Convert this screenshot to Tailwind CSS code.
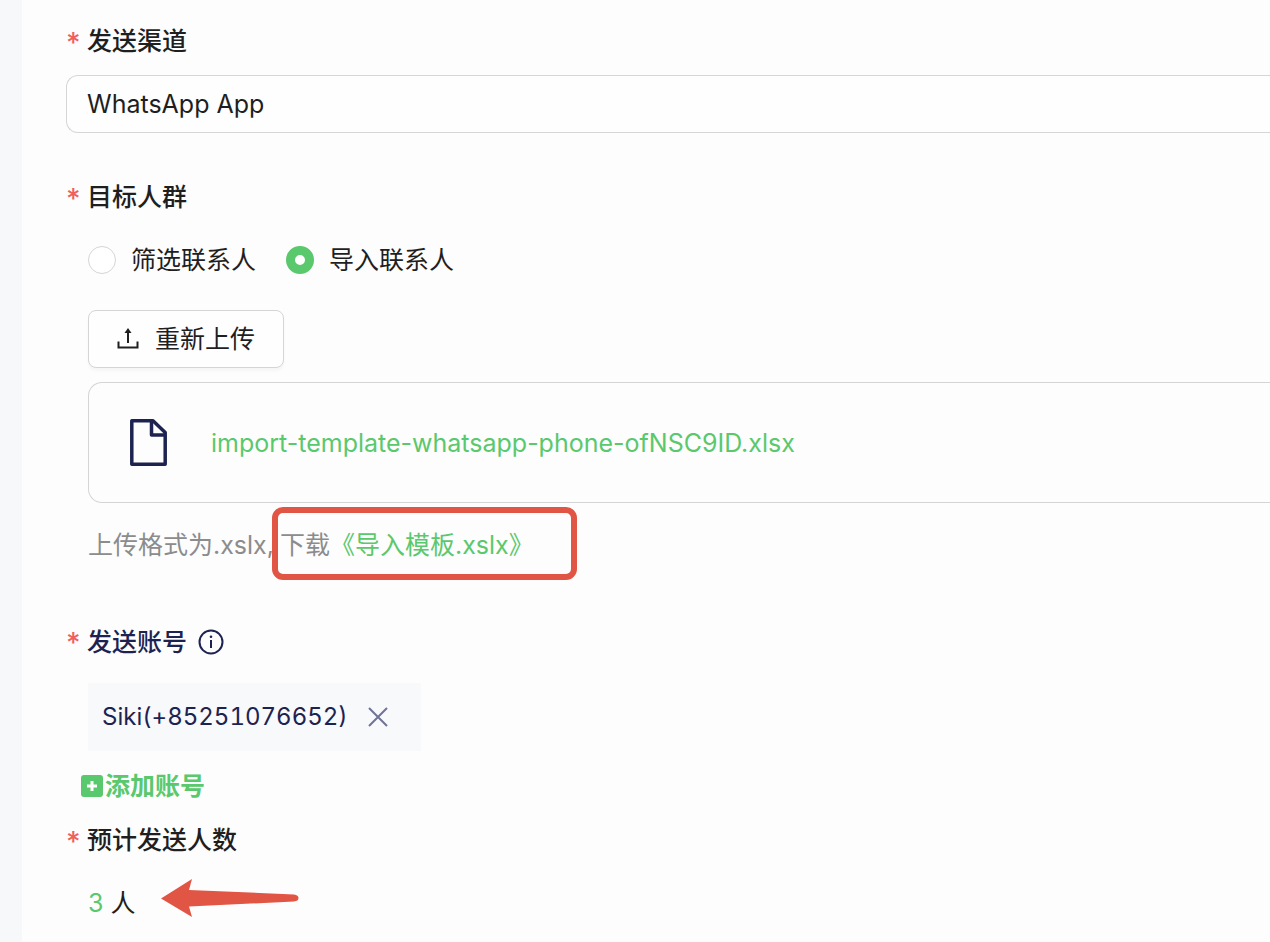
<!DOCTYPE html>
<html lang="zh-CN">
<head>
    <meta charset="UTF-8">
    <meta name="viewport" content="width=device-width, initial-scale=1.0">
    <title>发送设置</title>
    <script src="https://cdn.jsdelivr.net/npm/@tailwindcss/browser@4"></script>
</head>
<body class="flex min-h-screen overflow-x-hidden bg-[#f6f8fa] pl-[22px] font-['Inter','Noto_Sans_CJK_SC',sans-serif] text-[25px] leading-10 text-[#1f1f1f] antialiased">
    <form class="min-w-0 flex-1 bg-[#fdfdfd] pt-[21px] pl-11">

        <!-- Channel -->
        <label for="channel" class="flex font-medium"><span class="w-[21px] pt-[2px] text-[28px] text-[#f0605a]">*</span>发送渠道</label>
        <select id="channel" class="mt-3 block h-[58px] w-full appearance-none rounded-l-[12px] border border-r-0 border-[#d5d5d5] bg-[#fefefe] px-5">
            <option>WhatsApp App</option>
        </select>

        <!-- Audience -->
        <fieldset class="mt-11">
            <legend class="flex font-medium"><span class="w-[21px] pt-[2px] text-[28px] text-[#f0605a]">*</span>目标人群</legend>
            <div class="mt-[21px] flex gap-[30px] pl-[22px]">
                <label class="flex items-center gap-[15px]">
                    <input type="radio" name="audience" class="size-7 appearance-none rounded-full border border-[#d5d5d5] bg-white checked:border-[9px] checked:border-[#5ac86c]">
                    筛选联系人
                </label>
                <label class="flex items-center gap-[15px]">
                    <input type="radio" name="audience" checked class="size-7 appearance-none rounded-full border border-[#d5d5d5] bg-white checked:border-[9px] checked:border-[#5ac86c]">
                    导入联系人
                </label>
            </div>
        </fieldset>

        <div class="mt-[30px] pl-[22px]">
            <button type="button" class="flex h-[58px] items-center gap-4 rounded-lg border border-[#d5d5d5] bg-[#fefefe] px-7 shadow-[0_3px_3px_rgba(0,0,0,0.03)]">
                <svg class="h-[22px] w-[22px]" viewBox="0 0 22 22" fill="none" stroke="currentColor" stroke-width="2">
                    <path d="M1.500 13.500v6h19v-6M11 15V4" />
                    <path d="M11 0l3.500 5h-7z" fill="currentColor" stroke="none" />
                </svg>
                重新上传
            </button>

            <div class="mt-[14px] flex h-[121px] items-center gap-11 rounded-l-[14px] border border-r-0 border-[#d5d5d5] pl-[41px]">
                <svg class="h-[48px] w-[37px]" viewBox="0 0 37 48" fill="none" stroke="#1d2351" stroke-width="3.500" stroke-linejoin="round">
                    <path d="M1.800 1.800H23L35.200 13.500V45.200H1.800z" />
                    <path d="M21.500 2v14h13.500" />
                </svg>
                <a href="#" class="text-[#5ac86c]">import-template-whatsapp-phone-ofNSC9ID.xlsx</a>
            </div>

            <p class="mt-[22px] flex text-[#8c8c8c]">
                上传格式为.xslx,
                <span class="relative ml-[6px]">
                    下载<a href="#" class="text-[#5ac86c]">《导入模板.xslx》</a>
                    <span class="pointer-events-none absolute -top-[18px] -left-2 h-[73px] w-[305px] rounded-[11px] border-6 border-[#e15544]"></span>
                </span>
            </p>
        </div>

        <!-- Sender account -->
        <div class="mt-14 flex items-center font-medium text-[#1d2351]">
            <span class="w-[21px] pt-[2px] text-[28px] text-[#f0605a]">*</span>发送账号
            <svg class="ml-[11px] size-[26px]" viewBox="0 0 26 26" fill="none" stroke="currentColor" stroke-width="2">
                <circle cx="13" cy="13" r="11.500" />
                <path d="M13 11v8" />
                <circle cx="13" cy="7.800" r="1.300" fill="currentColor" stroke="none" />
            </svg>
        </div>
        <div class="mt-5 ml-[22px] flex h-[68px] w-[333px] items-center gap-5 bg-[#f8f9fb] pl-[14px] text-2xl text-[#1d2351] tabular-nums">
            Siki(+85251076652)
            <button type="button" aria-label="移除" class="text-[#6f7396]">
                <svg class="size-5" viewBox="0 0 20 20" fill="none" stroke="currentColor" stroke-width="2">
                    <path d="M1 1l18 18M19 1L1 19" />
                </svg>
            </button>
        </div>
        <button type="button" class="mt-[15px] ml-[15px] flex items-center gap-[2px] font-bold text-[#5ac86c]">
            <svg class="size-[22px]" viewBox="0 0 22 22">
                <rect width="22" height="22" rx="3" fill="currentColor" />
                <path d="M11 6v10M6 11h10" stroke="#fff" stroke-width="3" />
            </svg>
            添加账号
        </button>

        <!-- Estimated recipients -->
        <div class="mt-[14px] flex font-medium"><span class="w-[21px] pt-[2px] text-[28px] text-[#f0605a]">*</span>预计发送人数</div>
        <div class="mt-[17px] flex items-start pl-[22px]">
            <p class="pt-1">
                <span class="text-[#5ac86c]">3</span> 人
            </p>
            <svg class="ml-[25px] h-[38px] w-[138px]" viewBox="0 0 138 38" fill="#e15544">
                <path d="M0 19.500L31 0L28 11L133 15.500Q137.500 16 137.500 19T133 22.500L28 27.500L31 38z" />
            </svg>
        </div>
    </form>
</body>
</html>
